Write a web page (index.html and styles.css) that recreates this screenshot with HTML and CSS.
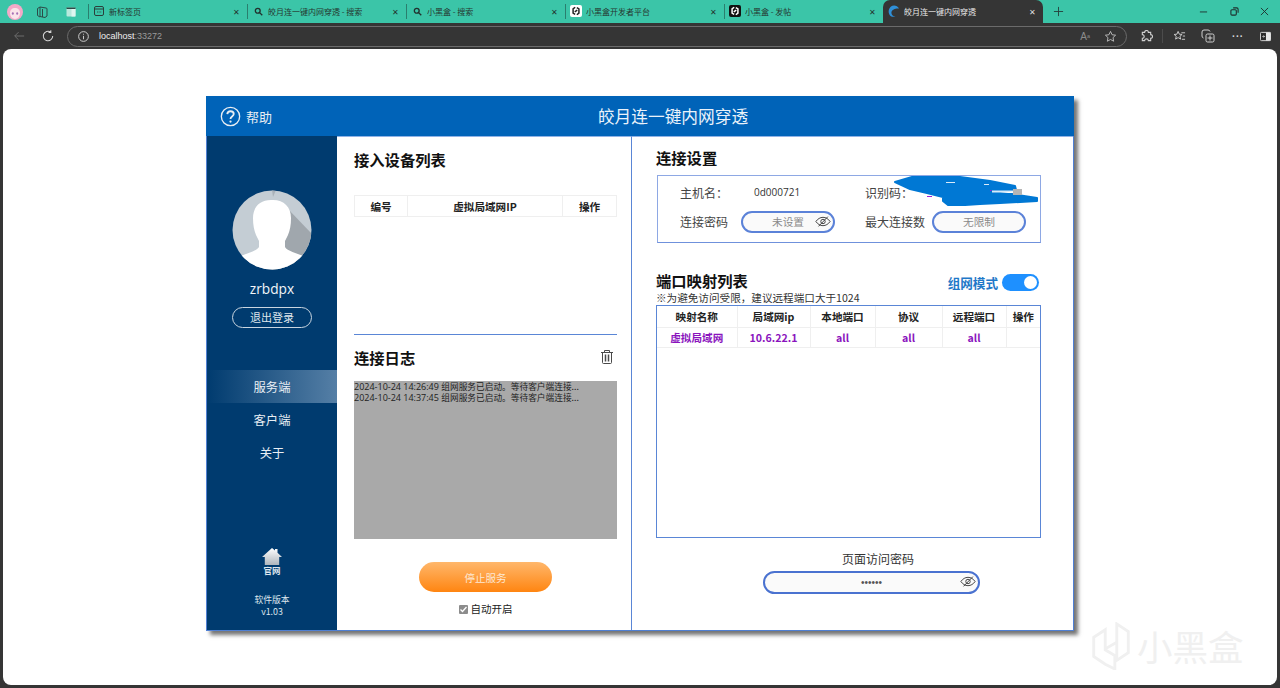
FILE: index.html
```html
<!DOCTYPE html>
<html lang="zh-CN">
<head>
<meta charset="utf-8">
<title>皎月连一键内网穿透</title>
<link rel="stylesheet" href="styles.css">
</head>
<body>
<div class="browser">
  <div class="tabstrip">
    <div class="strip-left">
      <span class="avatar-mini"><svg viewBox="0 0 16 16" width="16" height="16"><circle cx="8" cy="8" r="8" fill="#f4a9c8"/><path d="M3 9c0-3 2-5 5-5s5 2 5 5-2 6-5 6-5-3-5-6z" fill="#fbe4ea"/><ellipse cx="5.800" cy="9.500" rx="1" ry="1.200" fill="#a66fb5"/><ellipse cx="10.200" cy="9.500" rx="1" ry="1.200" fill="#a66fb5"/></svg></span>
      <span class="strip-icon"><svg viewBox="0 0 14 14" width="14" height="14" fill="none" stroke="#2c4a47" stroke-width="1"><path d="M5 2l6 1a1 1 0 0 1 1 1v7l-2 1.500-5-1z"/><path d="M5 2L2.500 3.500v7L5 12M7.500 4v8"/></svg></span>
      <span class="strip-icon"><svg viewBox="0 0 14 14" width="14" height="14"><rect x="2.500" y="2.500" width="9" height="9" rx="1" fill="#b9e9dd"/><rect x="7.500" y="4" width="4" height="7.500" fill="#dff6f0"/><rect x="2.500" y="2.500" width="9" height="1.500" fill="#2c4a47"/></svg></span>
    </div>
    <div class="tab"><span class="fav"><svg viewBox="0 0 12 12" width="12" height="12" fill="none" stroke="#2b3f3b"><rect x="1.500" y="1.500" width="9" height="9" rx="1.500"/><path d="M1.500 4h9M4 7h.8M5.700 7h.8M7.400 7h.8"/></svg></span><span class="tab-title">新标签页</span><span class="tab-x">✕</span></div>
    <div class="tab"><span class="fav"><svg viewBox="0 0 12 12" width="9" height="9" fill="none" stroke="#22302d" stroke-width="1.800"><circle cx="5" cy="5" r="3.200"/><path d="M7.500 7.500l3.500 3.500"/></svg></span><span class="tab-title">皎月连一键内网穿透 - 搜索</span><span class="tab-x">✕</span></div>
    <div class="tab"><span class="fav"><svg viewBox="0 0 12 12" width="9" height="9" fill="none" stroke="#22302d" stroke-width="1.800"><circle cx="5" cy="5" r="3.200"/><path d="M7.500 7.500l3.500 3.500"/></svg></span><span class="tab-title">小黑盒 - 搜索</span><span class="tab-x">✕</span></div>
    <div class="tab"><span class="fav fav-white"><svg viewBox="0 0 12 12" width="10" height="10" fill="none" stroke="#222" stroke-width="1.800"><path d="M5 1.500L2.500 3.500v5L5 10M7 2l2.500 1.500v5L7 10.500M4.500 7L7.500 5"/></svg></span><span class="tab-title">小黑盒开发者平台</span><span class="tab-x">✕</span></div>
    <div class="tab"><span class="fav fav-black"><svg viewBox="0 0 12 12" width="10" height="10" fill="none" stroke="#fff" stroke-width="1.800"><path d="M5 1.500L2.500 3.500v5L5 10M7 2l2.500 1.500v5L7 10.500M4.500 7L7.500 5"/></svg></span><span class="tab-title">小黑盒 - 发帖</span><span class="tab-x">✕</span></div>
    <div class="tab tab-active"><span class="fav"><svg viewBox="0 0 12 12" width="12" height="12"><path d="M11 3.500C9.500.5 5.500-.5 3 1.500.5 3.500-.5 8 2.500 11c1.500 1 3.500 1 5 .5C5 11.500 3 9.500 3.500 7 4 4.500 8 3 11 3.500z" fill="#2f8fd8"/></svg></span><span class="tab-title">皎月连一键内网穿透</span><span class="tab-x">✕</span></div>
    <span class="tab-new"><svg viewBox="0 0 12 12" width="11" height="11" stroke="#24423b"><path d="M6 1v10M1 6h10"/></svg></span>
    <div class="win-controls">
      <svg viewBox="0 0 10 10" width="9" height="9" stroke="#1f2f2c"><path d="M1 5.500h8"/></svg>
      <svg viewBox="0 0 10 10" width="9" height="9" fill="none" stroke="#1f2f2c" stroke-width="1.200"><rect x="1" y="3" width="6" height="6" rx="1.200"/><path d="M3.500 1h4a1.500 1.500 0 0 1 1.500 1.500v4"/></svg>
      <svg viewBox="0 0 10 10" width="9" height="9" stroke="#1f2f2c"><path d="M1 1l8 8M9 1l-8 8"/></svg>
    </div>
  </div>
  <div class="toolbar">
    <svg class="tool-btn back" viewBox="0 0 14 14" width="12" height="12" fill="none" stroke="#6f6f6f" stroke-width="1.100"><path d="M13 7H2M6.500 2.500L2 7l4.500 4.500"/></svg>
    <svg class="tool-btn reload" viewBox="0 0 14 14" width="12" height="12" fill="none" stroke="#d8d8d8" stroke-width="1.200"><path d="M12.500 7A5.500 5.500 0 1 1 10 2.400M10.300 .3V3H7.600"/></svg>
    <div class="addressbar">
      <svg viewBox="0 0 12 12" width="11" height="11" fill="none" stroke="#d8d8d8"><circle cx="6" cy="6" r="5.300"/><path d="M6 5.300V9M6 3v1"/></svg>
      <span class="url">localhost<span class="url-port">:33272</span></span>
      <span class="addr-right">
        <span class="read-a">A<small>ᵃ</small></span>
        <svg viewBox="0 0 14 14" width="13" height="13" fill="none" stroke="#bdbdbd"><path d="M7 1.500l1.700 3.600 3.800.5-2.800 2.600.7 3.900L7 10.200l-3.400 1.900.7-3.900L1.500 5.600l3.800-.5z"/></svg>
      </span>
    </div>
    <div class="tool-right">
      <svg class="t-ext" viewBox="0 0 14 14" width="13" height="13" fill="none" stroke="#d0d0d0" stroke-width="1.200"><path d="M5 2.500a2 2 0 0 1 4 0h2.500V5a2 2 0 0 1 0 4v2.500H9a2 2 0 0 0-4 0H2.500V9a2 2 0 0 0 0-4V2.500z"/></svg>
      <span class="tool-sep"></span>
      <svg class="t-fav" viewBox="0 0 14 14" width="13" height="13" fill="none" stroke="#d0d0d0"><path d="M5.500 1.500l1.300 3 3 .3-2.300 2 .7 3-2.700-1.600-2.700 1.600.7-3-2.300-2 3-.3zM9 3h4M10.500 6.500H13M9.500 10H13"/></svg>
      <svg class="t-col" viewBox="0 0 14 14" width="14" height="14" fill="none" stroke="#d0d0d0"><rect x="5" y="5" width="8" height="8" rx="1.500"/><path d="M9 6.500v5M6.500 9h5M9 2.500A2 2 0 0 0 7 1H3a2 2 0 0 0-2 2v4a2 2 0 0 0 1.500 2"/></svg>
      <span class="dots">···</span>
      <svg class="t-side" viewBox="0 0 12 12" width="11" height="11"><rect x=".5" y="1.500" width="11" height="9" rx="1" fill="#2b2b2b" stroke="#e0e0e0"/><rect x="6.500" y="1.500" width="5" height="9" fill="#e8e8e8"/><path d="M2.500 6h2.500M3.800 4.800L5 6 3.800 7.200" stroke="#e0e0e0" fill="none" stroke-width=".8"/></svg>
    </div>
  </div>
  <div class="viewport">
    <div class="app">
      <header class="app-header">
        <div class="help">
          <svg viewBox="0 0 22 22" width="21" height="21" fill="none" stroke="#e9eef3" stroke-width="1.400"><circle cx="11" cy="11" r="9.600"/><path d="M7.600 8.500A3.400 3.400 0 0 1 11 5.500c2 0 3.400 1.300 3.400 3 0 2.500-3.400 2.600-3.400 5" stroke-width="1.900"/><circle cx="11" cy="16.300" r="1.200" fill="#e9eef3" stroke="none"/></svg>
          <span>帮助</span>
        </div>
        <h1 class="app-title">皎月连一键内网穿透</h1>
      </header>
      <div class="app-body">
        <aside class="sidebar">
          <div class="user-pic">
            <svg viewBox="0 0 80 80" width="80" height="80"><defs><clipPath id="round"><circle cx="40" cy="40" r="39.500"/></clipPath></defs><g clip-path="url(#round)"><rect width="80" height="80" fill="#c4cdd4"/><path d="M56 19L80 44V80H40V40z" fill="#a0a7ad"/><path d="M40 0h4l-3 7z" fill="#a9b1b8"/><path d="M39 10c-11 0-18 7-18 18 0 7 1 12 3 17l3 6v6c-2 4-12 6-18 9-2 1-4 3-5 5 8 7 18 10 36 10s27-3 36-10c-1-2-3-4-5-5-6-3-16-5-18-9v-6l3-6c2-5 3-10 3-17 0-11-7-18-18-18z" fill="#fff"/></g></svg>
          </div>
          <div class="user-name">zrbdpx</div>
          <button class="logout" type="button">退出登录</button>
          <nav class="side-nav">
            <a class="nav-item nav-on">服务端</a>
            <a class="nav-item">客户端</a>
            <a class="nav-item">关于</a>
          </nav>
          <div class="side-foot">
            <svg viewBox="0 0 20 17" width="20" height="17"><defs><linearGradient id="home" x1="0" y1="0" x2="0" y2="1"><stop offset="0" stop-color="#fff"/><stop offset="1" stop-color="#aeb6bd"/></linearGradient></defs><path d="M10 0l3 2.500V1h2.500v3.700L20 9h-2.800v8H2.800V9H0z" fill="url(#home)"/></svg>
            <div class="site">官网</div>
            <div class="version">软件版本<br>v1.03</div>
          </div>
        </aside>
        <section class="middle">
          <h2 class="sec-title devices-title">接入设备列表</h2>
          <table class="grid device-grid">
            <colgroup><col class="c-a"><col class="c-b"><col class="c-c"></colgroup>
            <thead><tr><th>编号</th><th>虚拟局域网IP</th><th>操作</th></tr></thead>
          </table>
          <div class="mid-rule"></div>
          <div class="log-head">
            <h2 class="sec-title">连接日志</h2>
            <svg viewBox="0 0 12 14" width="12" height="14" fill="none" stroke="#4a4a4a" stroke-width="1"><path d="M0 2.500h12M3.500 2.500V.5h5v2M1.500 2.500v10a1 1 0 0 0 1 1h7a1 1 0 0 0 1-1v-10"/><path d="M4.500 4.500v7M7.500 4.500v7" stroke-width="1.500"/></svg>
          </div>
          <div class="log-box">2024-10-24 14:26:49 <span class="log-msg">组网服务已启动。等待客户端连接...</span><br>2024-10-24 14:37:45 <span class="log-msg">组网服务已启动。等待客户端连接...</span></div>
          <button class="stop-btn" type="button">停止服务</button>
          <label class="auto"><span class="check"><svg viewBox="0 0 9 9" width="9" height="9" fill="none" stroke="#fff" stroke-width="1.300"><path d="M1.500 4.500l2 2 4-4.500"/></svg></span>自动开启</label>
        </section>
        <section class="right">
          <h2 class="sec-title conn-title">连接设置</h2>
          <div class="conn-box">
            <div class="conn-row">
              <span class="lbl lbl-a">主机名：</span><span class="host">0d000721</span>
              <span class="lbl lbl-b">识别码：</span>
            </div>
            <div class="conn-row">
              <span class="lbl lbl-a lbl-pw">连接密码</span>
              <div class="pill pill-sm"><span class="pill-text">未设置</span><svg class="eye" viewBox="0 0 18 12" width="16" height="11" fill="none" stroke="#444" stroke-width="1.100"><path d="M1 6c2-3 5-4.700 8-4.700S15 3 17 6c-2 3-5 4.700-8 4.700S3 9 1 6z"/><circle cx="9" cy="6" r="2.500"/><path d="M14.500.5L4 11.500"/></svg></div>
              <span class="lbl lbl-max">最大连接数</span>
              <div class="pill pill-sm pill-max"><span class="pill-text">无限制</span></div>
            </div>
            <svg class="scribble" viewBox="0 0 170 70" width="170" height="70"><path d="M15 12L32 7 80 7 110 11 135 16 136 20 112 23 132 24 157 28 157 31 120 33 100 34 85 35 68 35 63 31 63 27 47 23 30 19z" fill="#0078d4" stroke="#0078d4" stroke-width="2" stroke-linejoin="round"/><path d="M112 20.500h21v2h-21zM66 12h9v1h-9zM104 14h5v1h-5z" fill="#fff" opacity=".85"/><rect x="133" y="19" width="9" height="6" fill="#b5b5b5"/><path d="M47 26.500h5M110 20.500h1.500" stroke="#9b1fd6"/></svg>
          </div>
          <div class="map-head">
            <div>
              <h2 class="sec-title">端口映射列表</h2>
              <p class="map-note">※为避免访问受限，建议远程端口大于1024</p>
            </div>
            <div class="mesh"><span>组网模式</span><span class="switch"><i></i></span></div>
          </div>
          <div class="map-frame">
            <table class="grid map-grid">
              <colgroup><col class="m1"><col class="m2"><col class="m3"><col class="m4"><col class="m5"><col></colgroup>
              <thead><tr><th>映射名称</th><th>局域网ip</th><th>本地端口</th><th>协议</th><th>远程端口</th><th>操作</th></tr></thead>
              <tbody><tr><td>虚拟局域网</td><td>10.6.22.1</td><td>all</td><td>all</td><td>all</td><td></td></tr></tbody>
            </table>
          </div>
          <div class="page-pw">
            <div class="page-pw-label">页面访问密码</div>
            <div class="pill pill-lg"><span class="pill-text pill-dots">••••••</span><svg class="eye" viewBox="0 0 18 12" width="16" height="11" fill="none" stroke="#444" stroke-width="1.100"><path d="M1 6c2-3 5-4.700 8-4.700S15 3 17 6c-2 3-5 4.700-8 4.700S3 9 1 6z"/><circle cx="9" cy="6" r="2.500"/><path d="M14.500.5L4 11.500"/></svg></div>
          </div>
        </section>
      </div>
    </div>
    <div class="watermark">
      <svg viewBox="0 0 40 50" width="40" height="48" fill="none" stroke="#f0f0f0" stroke-width="3"><path d="M14 8L2 16v20l12 8 10 5V35l-10-6V17zM14 28l12-7M26 2l12 8v22l-12 8V12z"/></svg>
      <span>小黑盒</span>
    </div>
  </div>
</div>
</body>
</html>
```
FILE: styles.css
```css
* { box-sizing: border-box; }
html, body { margin: 0; height: 100%; overflow: hidden; }
body { font-family: "Noto Sans CJK SC", "Liberation Sans", sans-serif; background: #353535; color: #222; }
.browser { width: 1280px; height: 688px; display: flex; flex-direction: column; background: #353535; }

.tabstrip { height: 23px; background: #3bc5a8; display: flex; align-items: stretch; padding-left: 5px; flex: none; }
.strip-left { width: 83px; display: flex; align-items: center; padding-left: 2px; flex: none; }
.avatar-mini { width: 16px; height: 16px; display: block; }
.avatar-mini svg, .strip-icon svg { display: block; }
.strip-icon { width: 14px; height: 14px; margin-left: 12px; display: block; }
.strip-icon + .strip-icon { margin-left: 15px; }
.tab { width: 159px; display: flex; align-items: center; padding: 0 5px 1px 5px; font-size: 8px; color: #26352f; position: relative; flex: none; }
.tab::before { content: ""; position: absolute; left: 0; top: 4px; width: 1px; height: 15px; background: #2a7f6e; }
.fav { width: 12px; height: 12px; display: flex; align-items: center; justify-content: center; margin-right: 4px; flex: none; }
.fav-white { background: #fff; border-radius: 2px; }
.fav-black { background: #111; border-radius: 2px; }
.tab-title { flex: 1; white-space: nowrap; overflow: hidden; }
.tab-x { font-size: 8px; color: #24332f; flex: none; margin-right: 2px; }
.tab-active { width: 160px; background: #353535; color: #e8e8e8; border-radius: 7px 7px 0 0; }
.tab-active::before { display: none; }
.tab-active .tab-x { color: #ddd; }
.tab-new { width: 30px; display: flex; align-items: center; justify-content: center; flex: none; }
.win-controls { margin-left: auto; width: 81px; display: flex; align-items: center; justify-content: space-between; padding-right: 11px; flex: none; }
.win-controls svg { display: block; }

.toolbar { height: 26px; background: #353535; display: flex; align-items: center; padding: 0 9px 0 13px; flex: none; }
.tool-btn { flex: none; }
.back { margin-right: 17px; }
.reload { margin-right: 13px; }
.addressbar { width: 1060px; height: 21px; border: 1px solid #6b6b6b; border-radius: 11px; display: flex; align-items: center; padding: 0 8px 0 10px; gap: 10px; flex: none; }
.addressbar svg { flex: none; display: block; }
.url { font: 9px "Liberation Sans", sans-serif; color: #efefef; }
.url-port { color: #9a9a9a; }
.addr-right { margin-left: auto; display: flex; align-items: center; gap: 14px; margin-right: 1px; }
.read-a { color: #8c8c8c; font: 10px "Liberation Sans", sans-serif; }
.read-a small { font-size: 8px; }
.tool-right { flex: 1; display: flex; align-items: center; }
.t-ext { margin-left: 13px; flex: none; }
.tool-sep { width: 1px; height: 14px; background: #4c4c4c; margin-left: 9px; flex: none; }
.t-fav { margin-left: 10px; flex: none; }
.t-col { margin-left: 15px; flex: none; }
.dots { color: #d8d8d8; font: bold 10px "Liberation Sans", sans-serif; margin-left: 17px; letter-spacing: .6px; }
.t-side { margin-left: auto; flex: none; }

.viewport { flex: 1; margin: 0 3px 3px; background: #fff; border-radius: 8px; position: relative; padding: 47px 0 0 203px; }

.app { width: 868px; height: 535px; background: #fff; border: 1px solid #4f7fd3; border-top: 0; box-shadow: 4px 4px 4px rgba(0,0,0,.55); display: flex; flex-direction: column; }
.app-header { height: 40px; background: #0063b8; color: #fff; display: flex; align-items: center; position: relative; flex: none; margin: 0 -1px; }
.help { display: flex; align-items: center; gap: 5px; padding-left: 14px; font-size: 13px; color: #e9eef3; }
.help svg { display: block; }
.app-title { position: absolute; left: 66px; right: 0; margin: 0; text-align: center; font-size: 16.700px; font-weight: 400; line-height: 40px; color: #eaf2fa; }
.app-body { flex: 1; display: flex; min-height: 0; }

.sidebar { width: 130px; background: #003b6f; color: #fff; display: flex; flex-direction: column; align-items: center; flex: none; padding-top: 54px; }
.user-pic { width: 80px; height: 80px; }
.user-pic svg { display: block; }
.user-name { font: 13.700px/18px "Open Sans", "Liberation Sans", sans-serif; margin-top: 10px; color: #f3f6f9; }
.logout { width: 80px; height: 21px; margin-top: 9px; border: 1px solid #c9d5e0; border-radius: 11px; background: transparent; color: #dfe6ec; font: 11px/17px "Noto Sans CJK SC", sans-serif; padding: 0; }
.side-nav { width: 100%; margin-top: 42px; display: flex; flex-direction: column; }
.nav-item { height: 33px; line-height: 35px; text-align: center; font-size: 12.300px; color: #e8eef4; }
.nav-on { background: linear-gradient(90deg, #003b6f, #557fa6); }
.side-foot { margin-top: auto; padding-bottom: 12px; text-align: center; display: flex; flex-direction: column; align-items: center; }
.side-foot svg { display: block; }
.site { font-size: 8.500px; line-height: 11px; color: #dde6ee; font-weight: 700; }
.version { font: 8.800px/12px "Noto Sans CJK SC", "Liberation Sans", sans-serif; margin-top: 18px; color: #dde6ee; }

.sec-title { font-size: 15.300px; font-weight: 700; margin: 0; color: #111; line-height: 22px; }
.middle { width: 295px; border-right: 1px solid #5a86d6; border-top: 1px solid #8fb2e6; padding: 11px 14px 0 17px; display: flex; flex-direction: column; flex: none; }
.grid { border-collapse: collapse; table-layout: fixed; width: 100%; font-size: 10.600px; }
.grid th, .grid td { border: 1px solid #efefef; text-align: center; padding: 0; height: 21px; }
.grid th { font-weight: 700; color: #222; }
.device-grid { margin-top: 25px; width: 263px; }
.c-a { width: 53px; }
.c-b { width: 155px; }
.mid-rule { border-top: 1px solid #5a86d6; margin-top: 117px; }
.log-head { display: flex; align-items: center; justify-content: space-between; padding: 11px 4px 0 0; }
.log-box { height: 158px; background: #a9a9a9; margin-top: 13px; font: 9px/11px "Open Sans", "Liberation Sans", sans-serif; color: #222; white-space: nowrap; overflow: hidden; }
.log-msg { font: 8.700px/11px "Noto Sans CJK SC", sans-serif; }
.stop-btn { align-self: center; width: 133px; height: 30px; margin-top: 23px; border: 0; border-radius: 15px; background: linear-gradient(180deg, #ffb76b, #ff8511); color: #fde8d4; font: 10.500px "Noto Sans CJK SC", sans-serif; padding: 0; }
.auto { align-self: center; display: flex; align-items: center; gap: 3px; margin-top: 9px; font-size: 10.500px; line-height: 16px; color: #222; }
.check { width: 9px; height: 9px; background: #8c8c8c; border-radius: 1px; display: block; }
.check svg { display: block; }

.right { flex: 1; border-top: 1px solid #8fb2e6; padding: 9px 33px 0 24px; display: flex; flex-direction: column; min-width: 0; }
.conn-box { width: 384px; height: 68px; margin: 7px 0 0 1px; border: 1px solid #8ea8e4; border-bottom-color: #6f91dc; position: relative; padding: 6px 0 0 22px; display: flex; flex-direction: column; gap: 8px; }
.conn-row { display: flex; align-items: center; height: 21px; font-size: 12px; }
.lbl { color: #444; flex: none; }
.lbl-a { width: 61px; }
.host { font: 10px "Open Sans", "Liberation Sans", sans-serif; color: #333; width: 111px; flex: none; margin-left: 13px; margin-top: -2px; }
.pill { border: 2px solid #5b82d8; border-radius: 12px; background: #fafafa; display: flex; align-items: center; position: relative; flex: none; }
.pill-sm { width: 94px; height: 22px; }
.pill-lg { border-color: #4a72d0; }
.pill-text { flex: 1; text-align: center; font-size: 10.700px; color: #8a8a8a; }
.eye { position: absolute; right: 2px; top: 3px; }
.lbl-max { margin-left: 30px; width: 67px; }
.scribble { position: absolute; left: 222px; top: -6px; }
.map-head { display: flex; justify-content: space-between; align-items: flex-start; margin-top: 26px; padding-right: 1px; }
.map-note { margin: 0; font-size: 10.600px; line-height: 13px; color: #333; }
.mesh { display: flex; align-items: center; gap: 4px; color: #1f78c8; font-size: 12.600px; font-weight: 700; margin-top: 4px; }
.switch { width: 37px; height: 17px; border-radius: 9px; background: #1e90ff; position: relative; display: block; }
.switch i { position: absolute; right: 2px; top: 2px; width: 13px; height: 13px; border-radius: 50%; background: #fff; }
.map-frame { width: 385px; height: 233px; margin-top: 1px; border: 1px solid #5a86d6; }
.map-grid th { height: 21px; border-top: 0; }
.map-grid th:first-child, .map-grid td:first-child { border-left: 0; }
.map-grid th:last-child, .map-grid td:last-child { border-right: 0; }
.map-grid td { color: #8a14bd; font-weight: 700; height: 20px; }
.m1 { width: 80px; }
.m2 { width: 73px; }
.m3 { width: 65px; }
.m4 { width: 67px; }
.m5 { width: 64px; }
.page-pw { display: flex; flex-direction: column; align-items: flex-start; margin-top: 13px; }
.page-pw-label { font-size: 12px; line-height: 16px; color: #333; margin-left: 186px; }
.pill-lg { width: 217px; height: 23px; margin: 4px 0 0 107px; }
.pill-dots { font: 10px "Liberation Sans", sans-serif; color: #555; }

.watermark { position: absolute; left: 1088px; bottom: 14px; display: flex; align-items: center; gap: 6px; color: #f0f0f0; font-size: 35.500px; line-height: 50px; }
.watermark svg { display: block; }
```
